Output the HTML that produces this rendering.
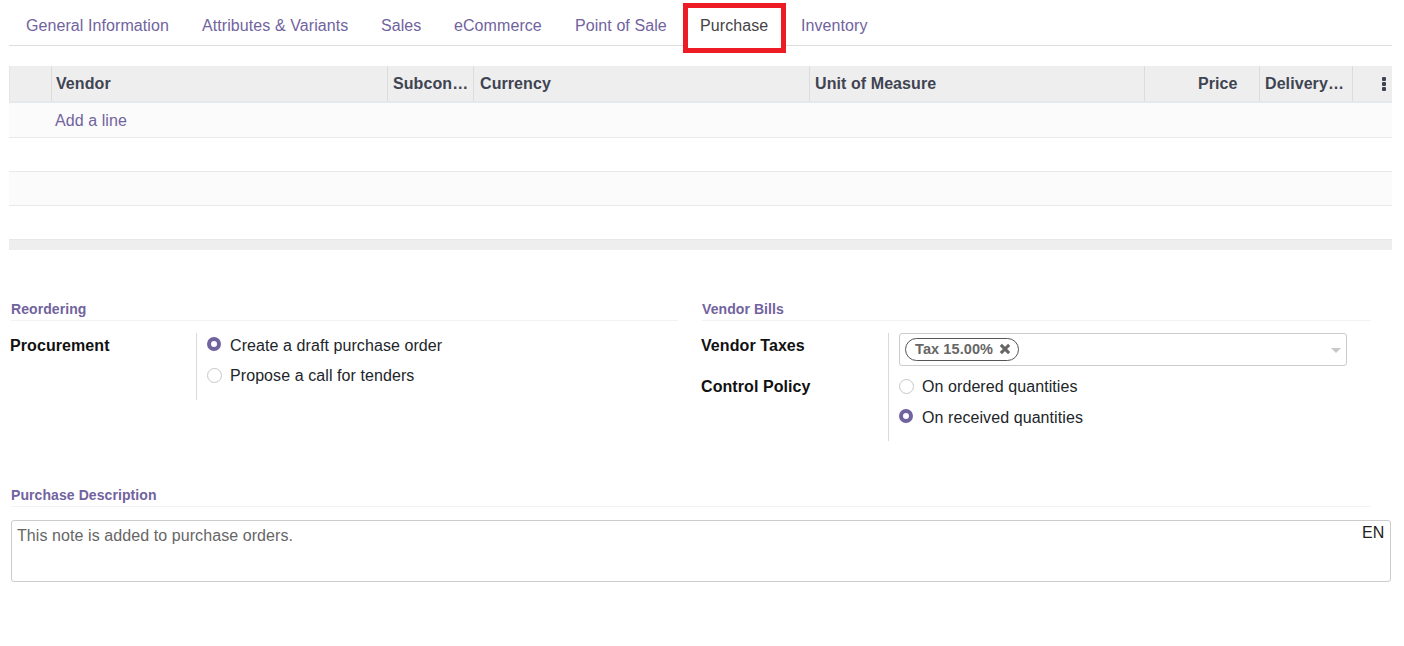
<!DOCTYPE html>
<html><head><meta charset="utf-8">
<style>
html,body{margin:0;padding:0;background:#fff;width:1404px;height:646px;overflow:hidden;}
body{font-family:"Liberation Sans",sans-serif;font-size:16px;color:#212529;position:relative;}
.a{position:absolute;white-space:nowrap;line-height:20px;letter-spacing:0.08px;}
.tab{color:#71639e;}
.tabline{position:absolute;left:9px;top:45px;width:1383px;height:1px;background:#dbdee1;}
.red{position:absolute;left:683px;top:3px;width:93px;height:40px;border:5px solid #ed1c24;}
.thead{position:absolute;left:9px;top:66px;width:1383px;height:35px;background:#eee;}
.vd{position:absolute;top:66px;width:1px;height:35px;background:#dcdcdc;}
.th{font-weight:bold;color:#3f4452;}
.row{position:absolute;left:9px;width:1383px;border-bottom:1px solid #e7e9ed;}
.sep{position:absolute;height:1px;background:#f2f2f2;}
.lbl{font-weight:bold;color:#111;}
.sec{font-weight:bold;color:#71639e;font-size:14px;}
.radio{position:absolute;width:13px;height:13px;border-radius:50%;border:1px solid #c8c8c8;background:#fff;}
.radio.on{width:6px;height:6px;border:4.5px solid #71639e;}
.opt{color:#212529;}
</style></head><body>
<!-- tabs -->
<div class="a tab" style="left:26px;top:16px;">General Information</div>
<div class="a tab" style="left:202px;top:16px;">Attributes &amp; Variants</div>
<div class="a tab" style="left:381px;top:16px;">Sales</div>
<div class="a tab" style="left:454px;top:16px;">eCommerce</div>
<div class="a tab" style="left:575px;top:16px;">Point of Sale</div>
<div class="a" style="left:700px;top:16px;color:#444;">Purchase</div>
<div class="a tab" style="left:801px;top:16px;">Inventory</div>
<div class="tabline"></div>
<div style="position:absolute;left:688px;top:45px;width:93px;height:1px;background:#fff"></div>
<div class="red"></div>

<!-- table -->
<div class="thead"></div>
<div style="position:absolute;left:9px;top:66px;width:1px;height:35px;background:#e2e5e8"></div>
<div style="position:absolute;left:9px;top:101px;width:1383px;height:2px;background:#e6e9ec"></div>
<div class="vd" style="left:51px"></div>
<div class="vd" style="left:387px"></div>
<div class="vd" style="left:473px"></div>
<div class="vd" style="left:809px"></div>
<div class="vd" style="left:1144px"></div>
<div class="vd" style="left:1259px"></div>
<div class="vd" style="left:1352px"></div>
<div class="a th" style="left:56px;top:74px;">Vendor</div>
<div class="a th" style="left:393px;top:74px;">Subcon…</div>
<div class="a th" style="left:480px;top:74px;">Currency</div>
<div class="a th" style="left:815px;top:74px;">Unit of Measure</div>
<div class="a th" style="left:1198px;top:74px;">Price</div>
<div class="a th" style="left:1265px;top:74px;">Delivery…</div>
<div style="position:absolute;left:1382px;top:77px;width:4px;height:4px;border-radius:1px;background:#3f4452"></div>
<div style="position:absolute;left:1382px;top:82px;width:4px;height:4px;border-radius:1px;background:#3f4452"></div>
<div style="position:absolute;left:1382px;top:87px;width:4px;height:4px;border-radius:1px;background:#3f4452"></div>

<div class="row" style="top:103px;height:34px;background:#fbfbfb"></div>
<div class="a" style="left:55px;top:111px;color:#71639e">Add a line</div>
<div class="row" style="top:138px;height:33px;background:#fff"></div>
<div class="row" style="top:172px;height:33px;background:#fbfbfb"></div>
<div class="row" style="top:206px;height:33px;background:#fff;border-bottom:none"></div>
<div style="position:absolute;left:9px;top:239px;width:1383px;height:10px;background:#eee;border-top:1px solid #e5e7eb"></div>

<!-- reordering -->
<div class="a sec" style="left:11px;top:299px;">Reordering</div>
<div class="sep" style="left:11px;top:320px;width:667px"></div>
<div class="a lbl" style="left:10px;top:336px;">Procurement</div>
<div style="position:absolute;left:196px;top:333px;width:1px;height:67px;background:#d8dadd"></div>
<div class="radio on" style="left:207px;top:337px"></div>
<div class="a opt" style="left:230px;top:336px;">Create a draft purchase order</div>
<div class="radio" style="left:207px;top:368px"></div>
<div class="a opt" style="left:230px;top:366px;">Propose a call for tenders</div>

<!-- vendor bills -->
<div class="a sec" style="left:702px;top:299px;">Vendor Bills</div>
<div class="sep" style="left:702px;top:320px;width:669px"></div>
<div class="a lbl" style="left:701px;top:336px;">Vendor Taxes</div>
<div class="a lbl" style="left:701px;top:377px;">Control Policy</div>
<div style="position:absolute;left:888px;top:333px;width:1px;height:108px;background:#d8dadd"></div>
<div style="position:absolute;left:899px;top:333px;width:446px;height:31px;border:1px solid #ccc;border-radius:3px"></div>
<div style="position:absolute;left:905px;top:338px;width:112px;height:21px;border:1px solid #555;border-radius:12px"></div>
<div class="a" style="left:915px;top:338.5px;font-size:14.5px;font-weight:bold;color:#666;letter-spacing:0.1px">Tax 15.00%</div>
<svg style="position:absolute;left:999px;top:343px" width="12" height="12" viewBox="0 0 12 12"><path d="M2.9 2.9L9.1 9.1M9.1 2.9L2.9 9.1" stroke="#666" stroke-width="3" stroke-linecap="square"/></svg>
<div style="position:absolute;left:1331px;top:348px;width:0;height:0;border-left:5px solid transparent;border-right:5px solid transparent;border-top:5px solid #c8c8c8"></div>
<div class="radio" style="left:899px;top:379px"></div>
<div class="a opt" style="left:922px;top:377px;">On ordered quantities</div>
<div class="radio on" style="left:899px;top:409px"></div>
<div class="a opt" style="left:922px;top:408px;">On received quantities</div>

<!-- description -->
<div class="a sec" style="left:11px;top:485px;">Purchase Description</div>
<div class="sep" style="left:11px;top:506px;width:1360px"></div>
<div style="position:absolute;left:11px;top:520px;width:1378px;height:60px;border:1px solid #ccc;border-radius:3px"></div>
<div class="a" style="left:17px;top:526px;color:#666">This note is added to purchase orders.</div>
<div class="a" style="left:1362px;top:523px;color:#222">EN</div>
</body></html>
